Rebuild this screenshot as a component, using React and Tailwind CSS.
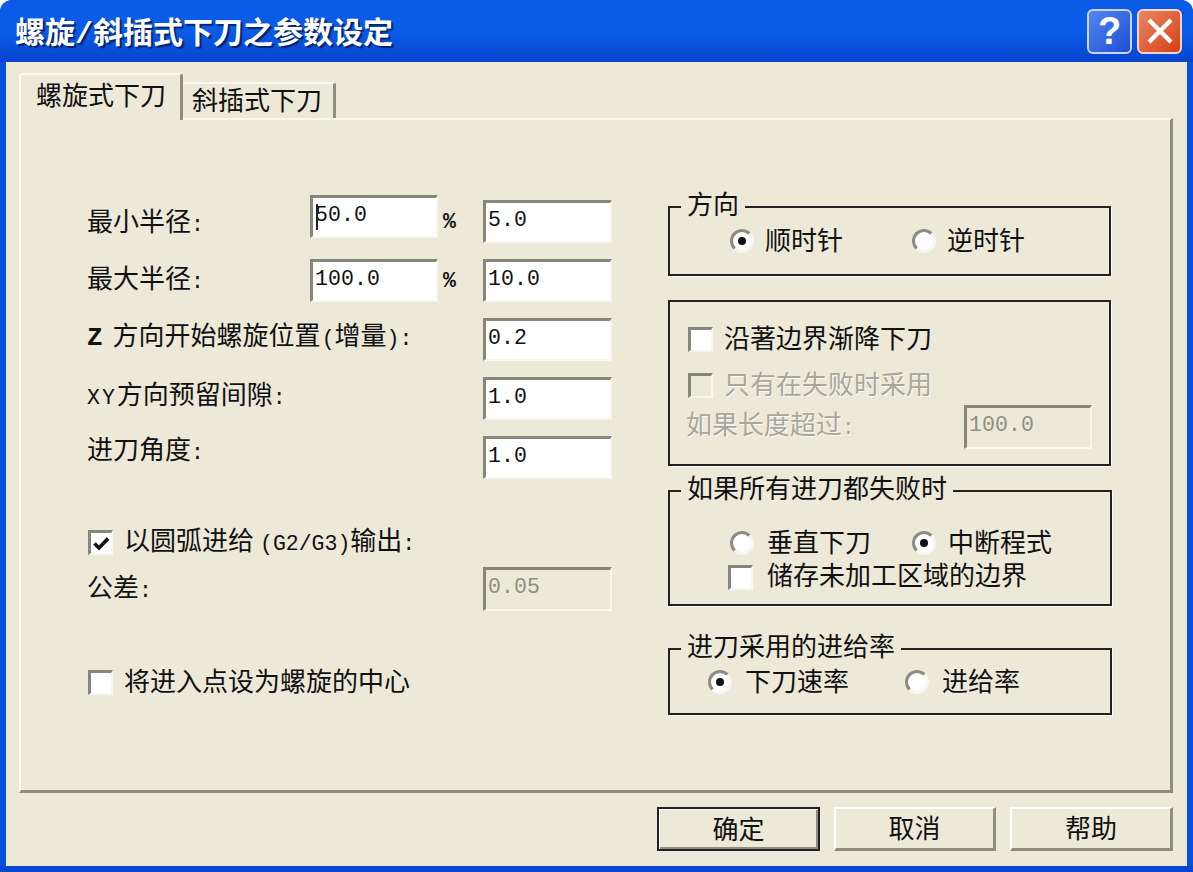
const cjk = "font-['Liberation_Mono','Noto_Sans_CJK_SC',monospace]";

// latin runs inside the CJK labels are narrower than the CJK glyphs
const L = ({ children }) => <span className="text-[21.5px]">{children}</span>;

const disabledText = 'text-[#a8a79a] [text-shadow:1px_1px_0_#fbfaf4]';

const Field = ({ value, disabled, caret, className = '' }) => (
  <div
    className={`relative flex items-center border-t-[3px] border-l-[3px] border-r-2 border-b-2 border-t-[#86867a] border-l-[#86867a] border-r-[#f7f6f0] border-b-[#f7f6f0] pl-[2px] text-[21.5px] leading-none ${
      disabled ? 'bg-[#ece9d8] text-[#8e8e82]' : 'bg-white text-[#111]'
    } ${className}`}
  >
    <span className="-mt-[3px] tracking-[0.1px]">{value}</span>
    {caret && <span className="absolute left-[3px] top-[6px] h-[26px] w-[2px] bg-[#222]" />}
  </div>
);

const Check = ({ checked, disabled }) => (
  <div
    className={`flex h-[25px] w-[25px] shrink-0 items-center justify-center border-t-[3px] border-l-[3px] border-r-2 border-b-2 border-t-[#86867a] border-l-[#86867a] border-r-[#f7f6f0] border-b-[#f7f6f0] ${
      disabled ? 'bg-[#ece9d8]' : 'bg-white'
    }`}
  >
    {checked && (
      <svg width="17" height="15" viewBox="0 0 17 15">
        <path d="M1.5 7.5 L6 12 L15 2.5" fill="none" stroke="#111" strokeWidth="3.6" />
      </svg>
    )}
  </div>
);

const Radio = ({ checked }) => (
  <div className="flex h-[24px] w-[24px] shrink-0 items-center justify-center rounded-full border-[3px] border-t-[#8c8c80] border-l-[#8c8c80] border-r-[#f7f6f0] border-b-[#f7f6f0] bg-white">
    {checked && <div className="h-[8px] w-[8px] rounded-full bg-[#111]" />}
  </div>
);

const Group = ({ legend, className = '', children }) => (
  <div className={`relative border-2 border-[#222] shadow-[1px_1px_0_#fbfaf4] ${className}`}>
    {legend && (
      <div className="absolute -top-[16px] left-[11px] bg-[#ece9d8] px-[6px] text-[26px] leading-[30px] text-[#111]">
        {legend}
      </div>
    )}
    {children}
  </div>
);

const Btn = ({ children, isDefault, className = '' }) => (
  <button
    className={`h-[44px] pt-[5px] text-[26px] leading-none text-[#111] bg-[#ece9d8] ${
      isDefault
        ? 'border-2 border-[#222] shadow-[inset_1px_1px_0_#fff,inset_-2px_-2px_0_#8d8d80]'
        : 'border-t-2 border-l-2 border-r-[3px] border-b-[3px] border-t-white border-l-white border-r-[#8d8d80] border-b-[#8d8d80]'
    } ${className}`}
  >
    {children}
  </button>
);

const App = () => {
  return (
    <div className={`flex h-[872px] w-[1193px] flex-col overflow-hidden rounded-t-[12px] bg-[#0a50dc] ${cjk}`}>
      {/* Title bar */}
      <div className="flex h-[62px] shrink-0 items-center justify-between bg-gradient-to-b from-[#0a5be6] via-[#0a5ce8] to-[#0644cc] pl-[15px] pr-[11px]">
        <div className="mt-[7px] text-[30px] font-bold leading-none text-white [text-shadow:2px_2px_1px_#08236e]">
          螺旋/斜插式下刀之参数设定
        </div>
        <div className="flex gap-[5px]">
          <div className="flex h-[45px] w-[45px] items-center justify-center rounded-[6px] border-2 border-[#c8d6f4] bg-gradient-to-br from-[#5585ee] to-[#1a4fd4] font-['Liberation_Sans',sans-serif] text-[38px] font-bold leading-none text-white">
            ?
          </div>
          <div className="flex h-[45px] w-[45px] items-center justify-center rounded-[6px] border-2 border-[#f0d8d0] bg-gradient-to-br from-[#e88660] to-[#d63c0c]">
            <svg width="28" height="28" viewBox="0 0 28 28">
              <path d="M3 3 L25 25 M25 3 L3 25" stroke="#fff" strokeWidth="4.5" fill="none" />
            </svg>
          </div>
        </div>
      </div>

      {/* Dialog body */}
      <div className="mx-[6px] flex min-h-0 flex-1 flex-col bg-[#ece9d8] pl-[13px] pr-[14px] pt-[11px]">
        {/* Tabs */}
        <div className="flex h-[45px] shrink-0 items-end">
          <div className="relative z-10 -mb-[2px] flex h-[47px] w-[164px] items-start rounded-t-[3px] border-t-2 border-l-2 border-r-[3px] border-t-[#fbfaf4] border-l-[#fbfaf4] border-r-[#8d8d80] bg-[#ece9d8] pl-[15px] pt-[7px] text-[26px] leading-[32px] text-[#111]">
            螺旋式下刀
          </div>
          <div className="flex h-[36px] w-[153px] items-start rounded-t-[3px] border-t-2 border-r-[3px] border-t-[#fbfaf4] border-r-[#8d8d80] bg-[#ece9d8] pl-[9px] pt-[3px] text-[26px] leading-[32px] text-[#111]">
            斜插式下刀
          </div>
        </div>

        {/* Panel */}
        <div className="flex h-[675px] w-[1154px] shrink-0 whitespace-nowrap border-t-2 border-l-2 border-r-[3px] border-b-[3px] border-t-[#fbfaf4] border-l-[#fbfaf4] border-r-[#8d8d80] border-b-[#8d8d80] pl-[66px] pt-[75px] text-[26px] leading-[30px] text-[#111]">
          {/* Left column */}
          <div className="flex w-[581px] shrink-0 flex-col">
            <div className="flex h-[64px] items-start">
              <div className="mt-[14px] w-[223px]">最小半径<L>:</L></div>
              <Field value="50.0" caret className="h-[43px] w-[128px]" />
              <div className="mt-[12px] w-[45px] pl-[5px] text-[21.5px] font-bold leading-[30px]">%</div>
              <Field value="5.0" className="mt-[5px] h-[43px] w-[129px]" />
            </div>
            <div className="flex h-[59px] items-start">
              <div className="mt-[7px] w-[223px]">最大半径<L>:</L></div>
              <Field value="100.0" className="h-[43px] w-[128px]" />
              <div className="mt-[7px] w-[45px] pl-[5px] text-[21.5px] font-bold leading-[30px]">%</div>
              <Field value="10.0" className="h-[43px] w-[129px]" />
            </div>
            <div className="flex h-[59px] items-start">
              <div className="mt-[5px] flex w-[396px]">
                <span className="font-bold">Z</span>
                <span className="ml-[10px]">方向开始螺旋位置</span>
                <span className="ml-[1px]"><L>(</L>增量<L>):</L></span>
              </div>
              <Field value="0.2" className="h-[43px] w-[129px]" />
            </div>
            <div className="flex h-[59px] items-start">
              <div className="mt-[5px] w-[396px]">
                <span className="text-[21.5px] tracking-[2px]">XY</span>方向预留间隙<L>:</L>
              </div>
              <Field value="1.0" className="h-[43px] w-[129px]" />
            </div>
            <div className="flex h-[43px] items-start">
              <div className="mt-[1px] w-[396px]">进刀角度<L>:</L></div>
              <Field value="1.0" className="h-[43px] w-[129px]" />
            </div>

            <div className="mt-[51px] flex h-[25px] items-center gap-[11px] pl-[1px]">
              <Check checked />
              <div className="mt-[2px] flex">
                <span>以圆弧进给</span>
                <span className="ml-[6px]"><L>(G2/G3)</L></span>
                <span>输出<L>:</L></span>
              </div>
            </div>
            <div className="mt-[12px] flex items-start">
              <div className="mt-[8px] w-[396px]">公差<L>:</L></div>
              <Field value="0.05" disabled className="h-[44px] w-[129px]" />
            </div>
            <div className="mt-[59px] flex h-[25px] items-center gap-[11px] pl-[1px]">
              <Check />
              <div className="mt-[3px]">将进入点设为螺旋的中心</div>
            </div>
          </div>

          {/* Right column */}
          <div className="flex w-[444px] shrink-0 flex-col pt-[11px]">
            <Group legend="方向" className="h-[70px] w-[443px]">
              <div className="mt-[21px] flex h-[24px] items-center pl-[60px]">
                <Radio checked />
                <div className="ml-[11px] mt-[4px] w-[78px]">顺时针</div>
                <div className="ml-[69px]"><Radio /></div>
                <div className="ml-[11px] mt-[4px]">逆时针</div>
              </div>
            </Group>

            <Group className="mt-[24px] h-[166px] w-[443px]">
              <div className="mt-[25px] flex h-[25px] items-center gap-[11px] pl-[18px]">
                <Check />
                <div className="mt-[3px]">沿著边界渐降下刀</div>
              </div>
              <div className="mt-[21px] flex h-[25px] items-center gap-[11px] pl-[18px]">
                <Check disabled />
                <div className={`mt-[3px] ${disabledText}`}>只有在失败时采用</div>
              </div>
              <div className="mt-[7px] flex items-start pl-[16px]">
                <div className={`mt-[7px] w-[278px] ${disabledText}`}>如果长度超过<L>:</L></div>
                <Field value="100.0" disabled className="h-[44px] w-[128px]" />
              </div>
            </Group>

            <Group legend="如果所有进刀都失败时" className="mt-[24px] h-[116px] w-[444px]">
              <div className="mt-[39px] flex h-[24px] items-center pl-[60px]">
                <Radio />
                <div className="ml-[13px] mt-[4px] w-[103px]">垂直下刀</div>
                <div className="ml-[42px]"><Radio checked /></div>
                <div className="ml-[12px] mt-[4px]">中断程式</div>
              </div>
              <div className="mt-[10px] flex h-[25px] items-center gap-[14px] pl-[58px]">
                <Check />
                <div className="mt-[1px]">储存未加工区域的边界</div>
              </div>
            </Group>

            <Group legend="进刀采用的进给率" className="mt-[42px] h-[67px] w-[444px]">
              <div className="mt-[20px] flex h-[24px] items-center pl-[38px]">
                <Radio checked />
                <div className="ml-[13px] mt-[4px] w-[103px]">下刀速率</div>
                <div className="ml-[57px]"><Radio /></div>
                <div className="ml-[13px] mt-[4px]">进给率</div>
              </div>
            </Group>
          </div>
        </div>

        {/* Footer buttons */}
        <div className="flex w-[1154px] shrink-0 justify-end gap-[14px] pt-[14px]">
          <Btn isDefault className="w-[163px]">确定</Btn>
          <Btn className="w-[162px]">取消</Btn>
          <Btn className="w-[163px]">帮助</Btn>
        </div>
      </div>

      {/* Bottom window frame */}
      <div className="h-[6px] shrink-0 bg-[#0a46d0]" />
    </div>
  );
};

export default App;
